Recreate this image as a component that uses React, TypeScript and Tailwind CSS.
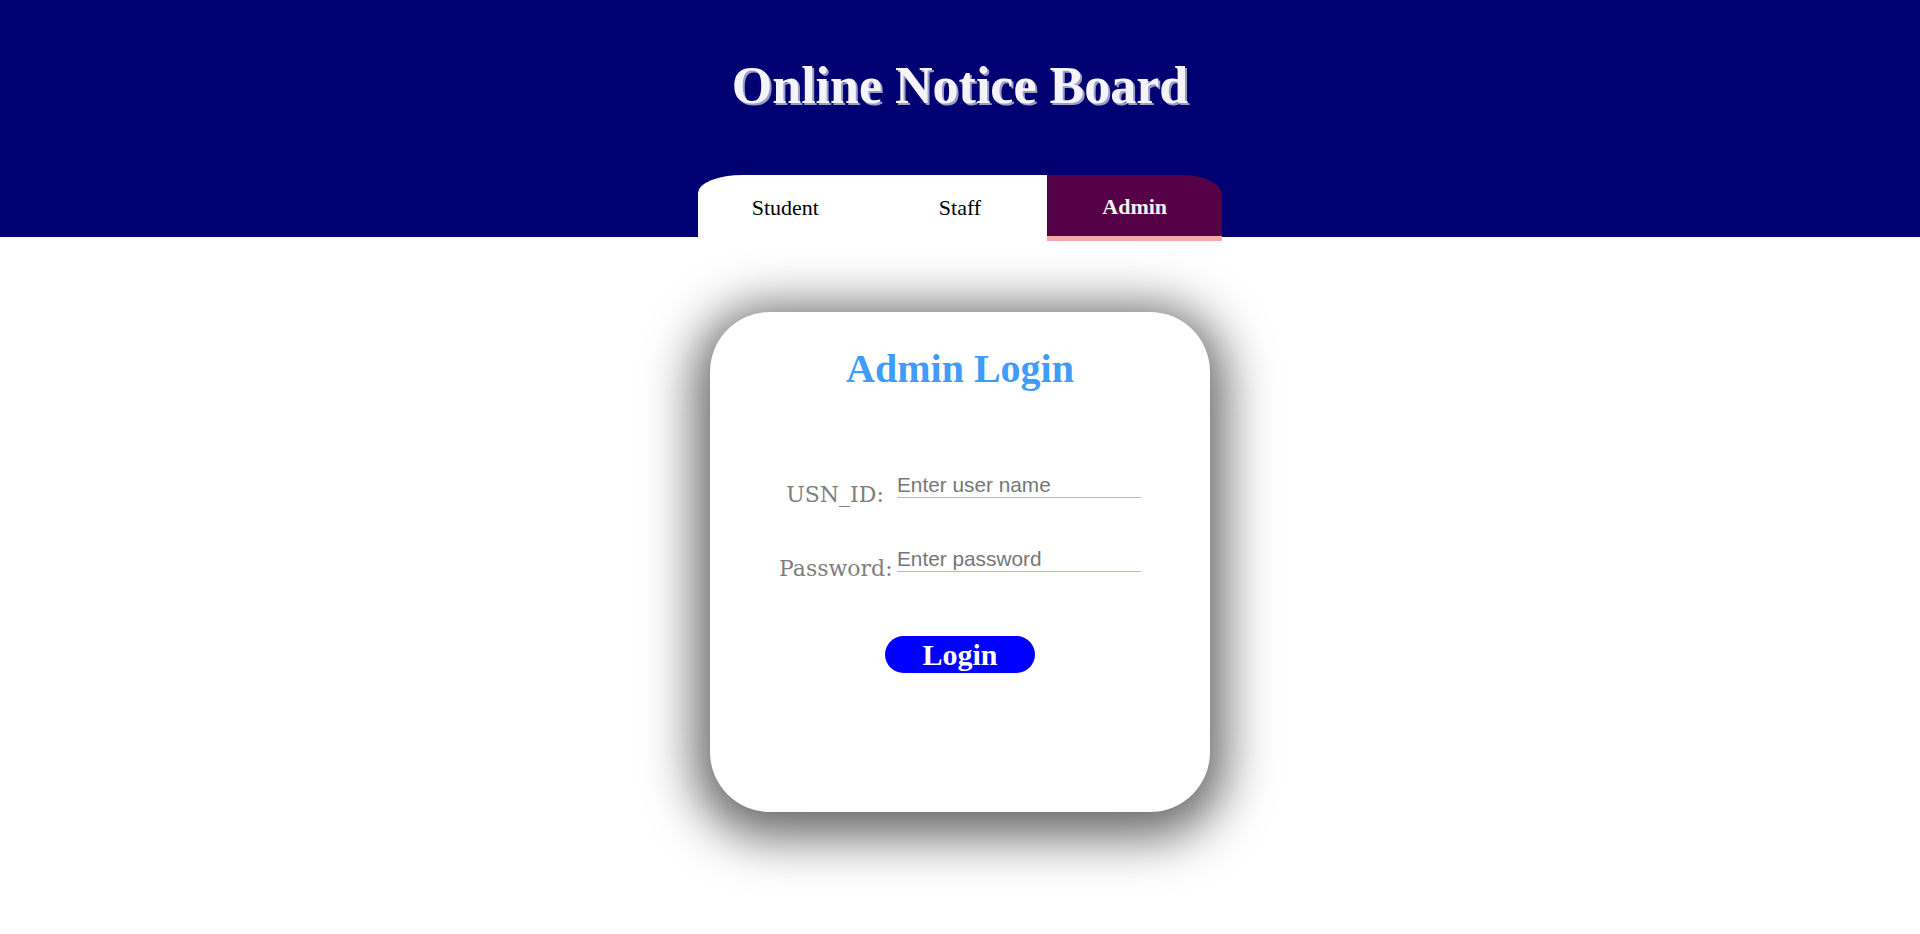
import React from "react";

export default function App() {
  return (
    <div className="min-h-[934px] w-full bg-white">
      <header className="flex h-[237px] flex-col items-center bg-[#000073]">
        <h1
          className="mt-[60px] text-[52px] font-bold leading-none text-[#f4f4fa] [text-shadow:2px_2px_0_#9c9cc4]"
          style={{ fontFamily: '"Liberation Serif", serif' }}
        >
          Online Notice Board
        </h1>
        <nav
          className="mt-auto flex h-[62px] w-[524px] items-start text-[22px]"
          style={{ fontFamily: '"Liberation Serif", serif' }}
        >
          <div className="flex h-[62px] flex-1 items-center justify-center rounded-tl-[45px_18px] bg-white pt-[2px] text-black">
            Student
          </div>
          <div className="flex h-[62px] flex-1 items-center justify-center bg-white pt-[2px] text-black">
            Staff
          </div>
          <div className="box-border flex h-[66px] flex-1 items-center justify-center rounded-tr-[40px_20px] border-b-[5px] border-[#f5a9ab] bg-[#550047] pt-[2px] font-bold text-[#f4f0f4]">
            Admin
          </div>
        </nav>
      </header>

      <main className="flex justify-center">
        <div className="mt-[75px] flex h-[500px] w-[500px] flex-col items-center rounded-[60px] bg-white shadow-[0_10px_50px_15px_rgba(0,0,0,0.6)]">
          <h2
            className="mt-[37px] text-[40px] font-bold leading-none text-[#419bf9]"
            style={{ fontFamily: '"Liberation Serif", serif' }}
          >
            Admin Login
          </h2>

          <div className="mt-[83px] grid grid-cols-[112px_244px] items-start gap-x-[6px]">
            <label
              className="mt-[10px] text-center text-[22px] leading-[26px] text-[#808080]"
              style={{ fontFamily: '"DejaVu Serif", serif' }}
            >
              USN_ID:
            </label>
            <input
              type="text"
              placeholder="Enter user name"
              className="h-[26px] w-[244px] border-b border-[#b0cf5e] bg-transparent p-0 text-[20.8px] leading-[25px] text-[#555] outline-none placeholder:text-[#777]"
              style={{ fontFamily: '"Liberation Sans", Arial, sans-serif' }}
            />
          </div>

          <div className="mt-[38px] grid grid-cols-[112px_244px] items-start gap-x-[6px]">
            <label
              className="mt-[10px] text-center text-[22px] leading-[26px] text-[#808080]"
              style={{ fontFamily: '"DejaVu Serif", serif' }}
            >
              Password:
            </label>
            <input
              type="password"
              placeholder="Enter password"
              className="h-[26px] w-[244px] border-b border-[#b0cf5e] bg-transparent p-0 text-[20.8px] leading-[25px] text-[#555] outline-none placeholder:text-[#777]"
              style={{ fontFamily: '"Liberation Sans", Arial, sans-serif' }}
            />
          </div>

          <button
            type="button"
            className="mt-[54px] flex h-[37px] w-[150px] items-center justify-center rounded-full bg-[#0000ff] text-[30px] font-bold leading-none text-white"
            style={{ fontFamily: '"Liberation Serif", serif' }}
          >
            Login
          </button>
        </div>
      </main>
    </div>
  );
}
